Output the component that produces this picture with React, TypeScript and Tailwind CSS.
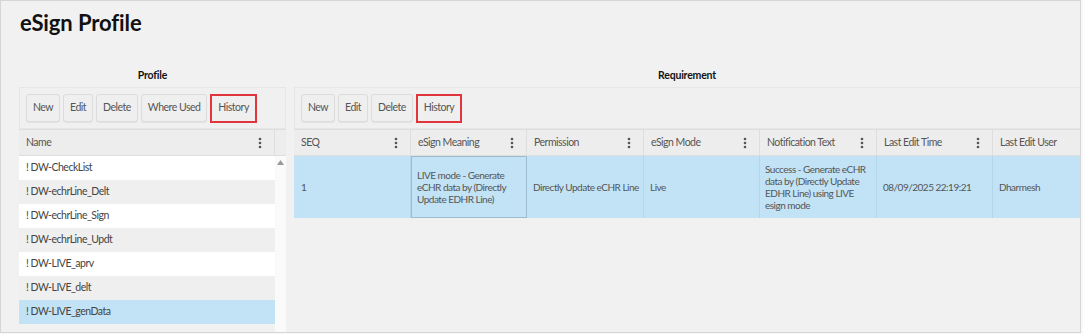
import React from "react";

const Kebab = () => (
  <svg width="4" height="12" viewBox="0 0 4 12" className="shrink-0">
    <circle cx="2" cy="2" r="1.3" fill="#555" />
    <circle cx="2" cy="6" r="1.3" fill="#555" />
    <circle cx="2" cy="10" r="1.3" fill="#555" />
  </svg>
);

const Btn = ({ label, hl }: { label: string; hl?: boolean }) => (
  <div
    className={
      hl
        ? "h-[29px] px-[6px] flex items-center whitespace-nowrap border-2 border-[#e0353b] bg-[#efefef] text-[10.5px] text-[#555]"
        : "h-[28px] px-[6px] flex items-center whitespace-nowrap rounded-[3px] border border-[#dcdcdc] bg-[#efefef] shadow-[0_1px_1px_rgba(0,0,0,0.06)] text-[10.5px] text-[#555]"
    }
  >
    {label}
  </div>
);

const names = [
  "! DW-CheckList",
  "! DW-echrLine_Delt",
  "! DW-echrLine_Sign",
  "! DW-echrLine_Updt",
  "! DW-LIVE_aprv",
  "! DW-LIVE_delt",
  "! DW-LIVE_genData",
];

const cols: { t: string; w: string }[] = [
  { t: "SEQ", w: "w-[117px]" },
  { t: "eSign Meaning", w: "w-[116px]" },
  { t: "Permission", w: "w-[117px]" },
  { t: "eSign Mode", w: "w-[116px]" },
  { t: "Notification Text", w: "w-[117px]" },
  { t: "Last Edit Time", w: "w-[116px]" },
  { t: "Last Edit User", w: "w-[116px]" },
];

export default function App() {
  return (
    <div className="w-[1083px] h-[334px] bg-[#f8f8f8] overflow-hidden">
      <div className="w-[1081px] h-[333px] border border-[#d6d6d6] bg-[#f1f1f1] font-['Lato',sans-serif] tracking-[-0.5px] text-[#555] overflow-hidden">
        <h1 className="pl-[19px] mt-[10px] h-[24px] leading-[24px] text-[22px] font-bold text-[#111] tracking-[-0.1px]">
          eSign Profile
        </h1>
        <div className="mt-[30px] flex pl-[18px] gap-[8px]">
          {/* Left */}
          <div className="w-[267px] shrink-0 flex flex-col">
            <div className="h-[22px] flex items-center justify-center text-[10.5px] font-bold text-[#111] tracking-[-0.2px]">
              Profile
            </div>
            <div className="h-[42px] border border-[#e6e6e6] bg-[#f0f0f0] flex items-center gap-[3px] px-[6px]">
              <Btn label="New" />
              <Btn label="Edit" />
              <Btn label="Delete" />
              <Btn label="Where Used" />
              <Btn label="History" hl />
            </div>
            <div className="flex">
              <div className="w-[256px] flex flex-col">
                <div className="h-[27px] border-y border-[#dedede] border-r bg-[#ededed] flex items-center justify-between pl-[7px] pr-[12px] text-[10.5px]">
                  <span>Name</span>
                  <Kebab />
                </div>
                {names.map((n, i) => (
                  <div
                    key={n}
                    className={
                      "h-[24px] flex items-center pl-[7px] text-[10.5px] text-[#444] " +
                      (i === 6 ? "bg-[#c2e3f6]" : i % 2 === 0 ? "bg-white" : "bg-[#efefef]")
                    }
                  >
                    {n}
                  </div>
                ))}
              </div>
              <div className="w-[11px] flex flex-col">
                <div className="h-[27px] border-y border-[#dedede] bg-[#ededed]" />
                <div className="h-[200px] bg-[#fafafa] flex justify-center pt-[4px]">
                  <svg width="7" height="5" viewBox="0 0 7 5">
                    <path d="M3.5 0 L7 5 L0 5 Z" fill="#999" />
                  </svg>
                </div>
              </div>
            </div>
          </div>
          {/* Right */}
          <div className="flex-1 min-w-0 flex flex-col overflow-hidden">
            <div className="h-[22px] flex items-center justify-center text-[10.5px] font-bold text-[#111] tracking-[-0.2px]">
              Requirement
            </div>
            <div className="h-[42px] border-y border-l border-[#e6e6e6] bg-[#f0f0f0] flex items-center gap-[3px] px-[6px]">
              <Btn label="New" />
              <Btn label="Edit" />
              <Btn label="Delete" />
              <Btn label="History" hl />
            </div>
            <div className="flex h-[27px] bg-[#ededed] border-y border-[#dedede] overflow-hidden">
              {cols.map((c, i) => (
                <div
                  key={c.t}
                  className={
                    c.w +
                    " shrink-0 border-r border-[#dedede] flex items-center justify-between pl-[7px] pr-[12px] text-[10.5px] whitespace-nowrap"
                  }
                >
                  <span>{c.t}</span>
                  {i < 6 && <Kebab />}
                </div>
              ))}
            </div>
            <div className="flex h-[62px] bg-[#c2e3f6] overflow-hidden text-[10px] text-[#555] leading-[12px] whitespace-nowrap">
              <div className="w-[117px] shrink-0 border-r border-[#b5d6e9] flex items-center pl-[7px]">1</div>
              <div className="w-[116px] shrink-0 border border-[#9dbccd] flex items-center pl-[5px]">
                <span>
                  LIVE mode - Generate
                  <br />
                  eCHR data by (Directly
                  <br />
                  Update EDHR Line)
                </span>
              </div>
              <div className="w-[117px] shrink-0 border-r border-[#b5d6e9] flex items-center pl-[6px]">
                Directly Update eCHR Line
              </div>
              <div className="w-[116px] shrink-0 border-r border-[#b5d6e9] flex items-center pl-[6px]">Live</div>
              <div className="w-[117px] shrink-0 border-r border-[#b5d6e9] flex items-center pl-[5px]">
                <span>
                  Success - Generate eCHR
                  <br />
                  data by (Directly Update
                  <br />
                  EDHR Line) using LIVE
                  <br />
                  esign mode
                </span>
              </div>
              <div className="w-[116px] shrink-0 border-r border-[#b5d6e9] flex items-center pl-[6px]">
                08/09/2025 22:19:21
              </div>
              <div className="w-[116px] shrink-0 flex items-center pl-[6px]">Dharmesh</div>
            </div>
          </div>
        </div>
      </div>
    </div>
  );
}
